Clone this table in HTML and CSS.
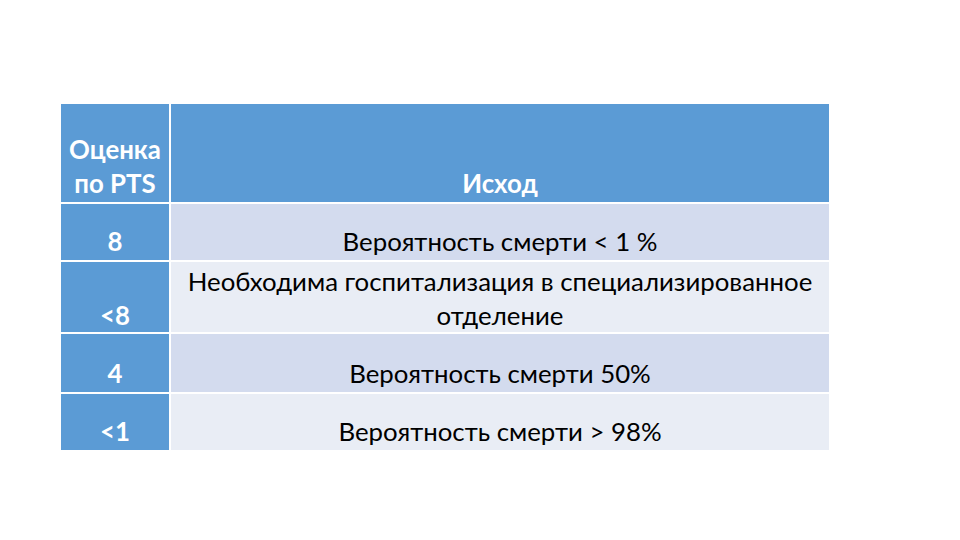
FILE: index.html
```html
<!DOCTYPE html>
<html lang="ru">
<head>
<meta charset="utf-8">
<link rel="stylesheet" href="styles.css">
</head>
<body>
<div class="slide">
  <table class="pts">
    <thead>
      <tr class="head">
        <th class="c1">Оценка<br>по PTS</th>
        <th class="c2">Исход</th>
      </tr>
    </thead>
    <tbody>
      <tr class="r1 odd">
        <td class="c1">8</td>
        <td class="c2">Вероятность смерти &lt; 1 %</td>
      </tr>
      <tr class="r2 even">
        <td class="c1">&lt;8</td>
        <td class="c2">Необходима госпитализация в специализированное<br>отделение</td>
      </tr>
      <tr class="r3 odd">
        <td class="c1">4</td>
        <td class="c2">Вероятность смерти 50%</td>
      </tr>
      <tr class="r4 even">
        <td class="c1">&lt;1</td>
        <td class="c2">Вероятность смерти &gt; 98%</td>
      </tr>
    </tbody>
  </table>
</div>
</body>
</html>
```

FILE: styles.css
```css
html, body {
  margin: 0;
  padding: 0;
  background: #ffffff;
}
.slide {
  width: 960px;
  height: 540px;
  padding: 104px 0 0 61px;
  box-sizing: border-box;
  font-family: Lato, "Open Sans", sans-serif;
}
.pts {
  border-collapse: separate;
  border-spacing: 0;
  width: 768px;
  table-layout: fixed;
}
.pts th, .pts td {
  padding: 0 0 2px 0;
  text-align: center;
  vertical-align: bottom;
  font-size: 25.8px;
  line-height: 34px;
}
.pts .c1 {
  width: 108px;
  border-right: 2px solid #ffffff;
  background: #5b9bd5;
  color: #ffffff;
  font-weight: bold;
}
.pts th {
  background: #5b9bd5;
  color: #ffffff;
  font-weight: bold;
  border-bottom: 2px solid #ffffff;
}
.pts td {
  border-top: 2px solid #ffffff;
  color: #000000;
  font-weight: normal;
}
.pts td.c1 {
  color: #ffffff;
  font-weight: bold;
}
.head { height: 100px; }
.odd .c2 { background: #d3dbee; }
.even .c2 { background: #e9edf5; }
.pts tbody tr:first-child td { border-top: none; }
.r1 { height: 56px; }
.r2 { height: 72px; }
.pts .r2 td { padding-bottom: 0; }
.r3 { height: 60px; }
.r4 { height: 58px; }
```
